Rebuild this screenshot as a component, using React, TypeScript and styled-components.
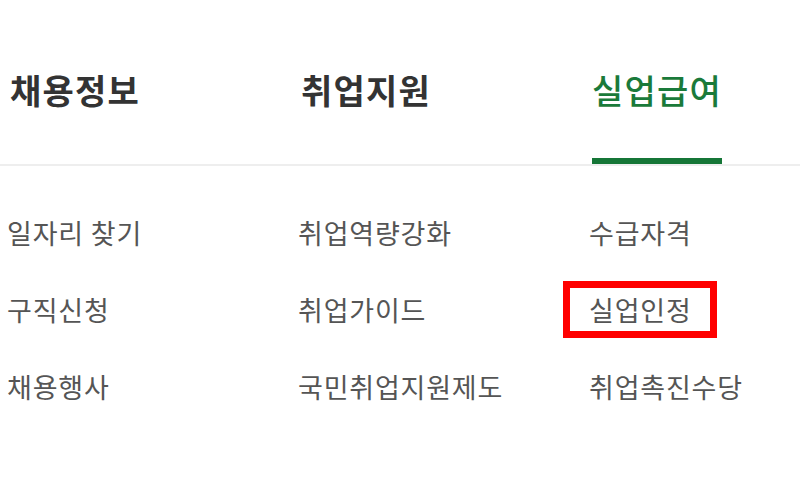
import React from "react";
import styled, { createGlobalStyle, css } from "styled-components";

const GlobalStyle = createGlobalStyle`
  html, body {
    margin: 0;
    padding: 0;
    background: #ffffff;
  }
  body {
    font-family: "Noto Sans CJK KR", "Noto Sans", sans-serif;
    width: 800px;
    height: 500px;
    overflow: hidden;
  }
  ul { list-style: none; margin: 0; padding: 0; }
`;

const Page = styled.div`
  width: 800px;
  height: 500px;
  background: #ffffff;
  display: flex;
  flex-direction: column;
`;

const TabBar = styled.nav`
  display: grid;
  grid-template-columns: 291px 291px 1fr;
  height: 166px;
  box-sizing: border-box;
  padding-left: 10px;
  border-bottom: 2px solid #eeeeee;
`;

const Tab = styled.div`
  display: flex;
  align-items: flex-end;
`;

const TabLabel = styled.span<{ $active?: boolean }>`
  display: inline-block;
  font-size: 34px;
  line-height: 34px;
  font-weight: 700;
  letter-spacing: 1.2px;
  color: #333333;
  padding-bottom: 51px;
  border-bottom: 6px solid transparent;
  ${(p) =>
    p.$active &&
    css`
      color: #1a7a3a;
      font-weight: 500;
      border-bottom-color: #157637;
    `}
`;

const MenuGrid = styled.div`
  display: grid;
  grid-template-columns: 291px 291px 1fr;
  padding-left: 7px;
  padding-top: 28px;
`;

const MenuList = styled.ul`
  display: flex;
  flex-direction: column;
`;

const MenuItem = styled.li`
  height: 77px;
  display: flex;
  align-items: center;
`;

const MenuLabel = styled.span<{ $marked?: boolean }>`
  position: relative;
  display: inline-block;
  font-size: 27px;
  line-height: 27px;
  letter-spacing: 0.8px;
  color: #555555;
  ${(p) =>
    p.$marked &&
    css`
      &::after {
        content: "";
        position: absolute;
        top: -15px;
        bottom: -15px;
        left: -26px;
        right: -25px;
        border: 7px solid #ff0000;
      }
    `}
`;

const tabs = [
  { label: "채용정보", active: false },
  { label: "취업지원", active: false },
  { label: "실업급여", active: true },
];

const columns = [
  ["일자리 찾기", "구직신청", "채용행사"],
  ["취업역량강화", "취업가이드", "국민취업지원제도"],
  ["수급자격", "실업인정", "취업촉진수당"],
];

export default function App() {
  return (
    <>
      <GlobalStyle />
      <Page>
        <TabBar>
          {tabs.map((t) => (
            <Tab key={t.label}>
              <TabLabel $active={t.active}>{t.label}</TabLabel>
            </Tab>
          ))}
        </TabBar>
        <MenuGrid>
          {columns.map((col, i) => (
            <MenuList key={i}>
              {col.map((item) => (
                <MenuItem key={item}>
                  <MenuLabel $marked={item === "실업인정"}>{item}</MenuLabel>
                </MenuItem>
              ))}
            </MenuList>
          ))}
        </MenuGrid>
      </Page>
    </>
  );
}
